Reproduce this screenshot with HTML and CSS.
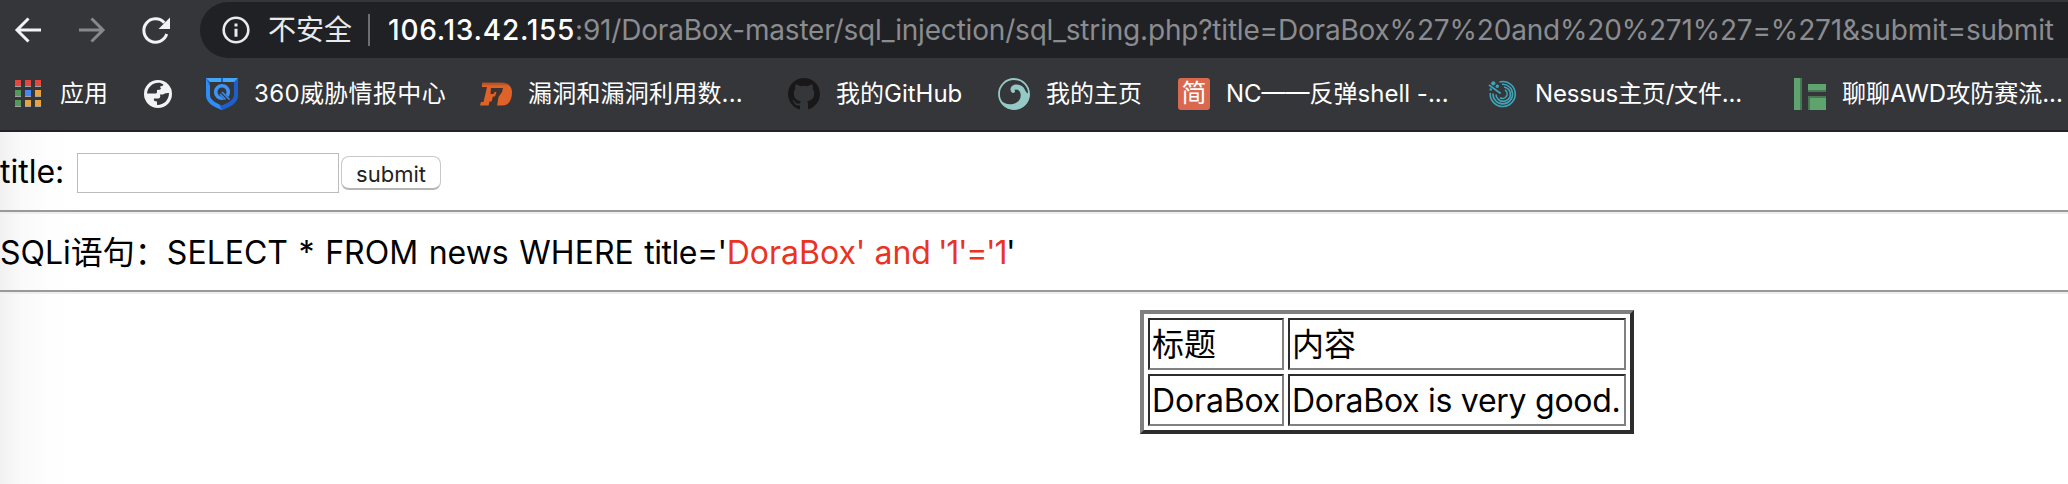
FILE: index.html
```html
<!DOCTYPE html>
<html lang="zh-CN">
<head>
<meta charset="utf-8">
<title>DoraBox</title>
<link rel="stylesheet" href="styles.css">
</head>
<body>
<header class="chrome">
  <div class="toolbar">
    <svg class="nav" viewBox="0 0 32 32"><path d="M29 16H5M16.500 4.500L5 16l11.500 11.500" fill="none" stroke="#f1f3f4" stroke-width="3"/></svg>
    <svg class="nav" viewBox="0 0 32 32"><path d="M3 16h24M15.500 4.500L27 16L15.500 27.500" fill="none" stroke="#87888b" stroke-width="3"/></svg>
    <svg class="nav" viewBox="0 0 32 32"><path d="M26.700 20A11.700 11.700 0 1 1 24.300 8.700" fill="none" stroke="#f1f3f4" stroke-width="3"/><path d="M30 3.500V15H18.500z" fill="#f1f3f4"/></svg>
    <div class="omnibox">
      <svg class="info" viewBox="0 0 28 28"><circle cx="14" cy="14" r="12.300" fill="none" stroke="#e8eaed" stroke-width="2.600"/><path d="M12.500 7.500h3v3h-3zM12.500 12.800h3v8h-3z" fill="#e8eaed"/></svg>
      <span class="insecure">不安全</span>
      <i class="divider"></i>
      <span class="host">106.13.42.155</span><span class="path">:91/DoraBox-master/sql_injection/sql_string.php?title=DoraBox%27%20and%20%271%27=%271&amp;submit=submit</span>
    </div>
  </div>
  <nav class="bookmarks">
    <a class="bm"><svg viewBox="0 0 32 32"><path d="M3 2h6v6H3zM13 2h6v6h-6zM23 2h6v6h-6z" fill="#e8453c"/><path d="M3 12h6v6H3zM3 22h6v6H3z" fill="#539a5a"/><path d="M13 12h6v6h-6z" fill="#4688f1"/><path d="M23 12h6v6h-6zM13 22h6v6h-6zM23 22h6v6h-6z" fill="#e8a33d"/><path d="M3 8h6v1H3zM13 8h6v1h-6zM23 8h6v1h-6zM3 18h6v1H3zM13 18h6v1h-6zM23 18h6v1h-6zM3 28h6v1H3zM13 28h6v1h-6zM23 28h6v1h-6z" fill="#a3a3a3"/></svg><span>应用</span></a>
    <a class="bm"><svg viewBox="0 0 32 32"><circle cx="16" cy="16" r="14" fill="#f1f3f4"/><path d="M18 4.700C11 4 5.500 9 5 15.500h9q1 0 1-2V12q3 0 4-1l-1-2.500q3 0 3.500-2zM18 16.500h3q2-2 6-1.500c0 7-5 12-12 12v-3.500q-4 0-3-3h4q3 0 2-4z" fill="#35363a"/></svg></a>
    <a class="bm"><svg viewBox="0 0 32 32"><path d="M0 0h32v17c0 8-8 12-16 15C8 29 0 25 0 17z" fill="#1e5fc9"/><path d="M0 0v17c0 8 8 12 16 15z" fill="#2f8df7"/><path d="M4 4h24v13c0 5-6 8-12 10.500C10 25 4 22 4 17z" fill="#35363a"/><path d="M0 0h15v4H4zM17 0h15l-4 4H17z" fill="#45a6f7"/><circle cx="16" cy="14" r="6.300" fill="none" stroke="#3d94f7" stroke-width="3.600"/><path d="M15.500 15.500l7 7" stroke="#35363a" stroke-width="5"/><path d="M16 14l7.500 7.500M14 16l5.500 5.500" stroke="#3d8be8" stroke-width="1.700"/><path d="M16 29.500V32c8-3 16-7 16-15h-4c0 5-6 8-12 10.500z" fill="#1e5fc9"/></svg><span class="b-intel">360威胁情报中心</span></a>
    <a class="bm"><svg viewBox="0 0 32 32"><path d="M2 5h19c8 0 11 4 11 9 0 8-3 13.500-10 13.500H0l1-3.500h2.500L7 9H2z" fill="#df6228"/><path d="M11 10h12l-1 4-3.500 5-1.500 9H8.500l1-4.500h2l1.500-5h2l1.500-4.500h-2l-1 2h-3z" fill="#3b3431"/><path d="M2 4.300h19c4 0 7 1 9 3H2z" fill="#a74c27" opacity=".6"/></svg><span class="b-vuln">漏洞和漏洞利用数...</span></a>
    <a class="bm"><svg viewBox="0 0 16 16"><path d="M8 0C3.580 0 0 3.580 0 8c0 3.540 2.290 6.530 5.470 7.590.4.070.55-.17.55-.38 0-.19-.01-.82-.01-1.490-2.010.37-2.530-.49-2.690-.94-.09-.23-.48-.94-.82-1.130-.28-.15-.68-.52-.01-.53.63-.01 1.080.58 1.230.82.72 1.210 1.870.87 2.330.66.07-.52.28-.87.51-1.070-1.780-.2-3.640-.89-3.640-3.950 0-.87.31-1.590.82-2.150-.08-.2-.36-1.020.08-2.120 0 0 .67-.21 2.200.82a7.600 7.600 0 0 1 4 0c1.530-1.040 2.200-.82 2.200-.82.44 1.100.16 1.920.08 2.120.51.56.82 1.270.82 2.150 0 3.070-1.870 3.750-3.650 3.950.29.25.54.73.54 1.480 0 1.070-.01 1.930-.01 2.200 0 .21.15.46.55.38A8.010 8.010 0 0 0 16 8c0-4.420-3.580-8-8-8z" fill="#191717"/></svg><span>我的GitHub</span></a>
    <a class="bm"><svg viewBox="0 0 32 32"><circle cx="16" cy="16" r="15" fill="none" stroke="#94c9c5" stroke-width="1.800"/><path d="M31.500 15c1 10-7 16.500-15.500 16.500-7 0-12-4-14-10 4 4.500 9 5.500 13 4.500 6-1.500 8.500-6 7.500-10.500-.7-3.500-4-5-6.500-3.500 1 0 1.500 1.500.5 2.500-1.500 1.300-4-.2-4-3 0-3 2.500-5 6-5 6 0 8 4 9 6.500 1 2 3 3 4 2z" fill="#94c9c5"/></svg><span>我的主页</span></a>
    <a class="bm"><span class="jian">简</span><span>NC——反弹shell -...</span></a>
    <a class="bm"><svg viewBox="0 0 32 32" fill="none" stroke="#3ea5b8" stroke-width="1.600"><path d="M11.500 4A12.500 12.500 0 1 1 2.300 15"/><path d="M14 6.300A9.800 9.800 0 1 1 5 15.500"/><path d="M16 9a7.200 7.200 0 1 1-8 7.500"/><path d="M17 12a4.500 4.500 0 0 1-5 7.700"/><path d="M1 7l11.700 8.500"/><g fill="#3ea5b8" stroke="none"><circle cx="5.300" cy="5.300" r="2.100"/><circle cx="9.300" cy="8.300" r="1.700"/><circle cx="2.700" cy="11.500" r="1.200"/></g></svg><span class="b-nessus">Nessus主页/文件...</span></a>
    <a class="bm"><svg viewBox="0 0 32 32"><path d="M0 0h8v32H0zM14 6h18v6H14zM14 19h18v13H14z" fill="#5da46e"/><path d="M6 0h2v32H6zM14 12h18v2H14zM14 18h18v2H14zM14 19h2v13h-2z" fill="#4a7656"/></svg><span>聊聊AWD攻防赛流...</span></a>
  </nav>
</header>
<main class="page">
  <form class="query"><label class="title" for="title">title:</label><input id="title" class="field" type="text"><button class="submit" type="button">submit</button></form>
  <hr class="rule">
  <p class="sql"><span class="label">SQLi语句：</span><span class="stmt">SELECT * FROM news WHERE </span><span class="assign">title='</span><span class="red">DoraBox' and <span class="tight">'1'='1</span></span>'</p>
  <hr class="rule">
  <table class="result">
    <tr><td class="c1">标题</td><td>内容</td></tr>
    <tr><td><span class="name">DoraBox</span></td><td><span class="content">DoraBox is very good.</span></td></tr>
  </table>
</main>
</body>
</html>
```
FILE: styles.css
```css
* { box-sizing: border-box; }
body {
  margin: 0;
  width: 2068px;
  height: 484px;
  overflow: hidden;
  background: #fff;
  color: #000;
  font-family: Inter, "Noto Sans CJK SC", sans-serif;
}
.chrome {
  height: 132px;
  background: #35363a;
  border-bottom: 2px solid #242225;
  overflow: hidden;
}
.toolbar { display: flex; align-items: center; height: 58px; padding: 2px 0 0 12px; }
.nav { width: 32px; height: 32px; margin-right: 32px; flex: none; }
.omnibox {
  display: flex;
  align-items: center;
  flex: none;
  width: 1900px;
  height: 56px;
  margin-left: -4px;
  padding-left: 22px;
  border-radius: 28px 0 0 28px;
  background: #202124;
  font-size: 28px;
  line-height: 56px;
  white-space: nowrap;
}
.info { width: 28px; height: 28px; flex: none; }
.insecure { margin-left: 18px; color: #e8eaed; }
.divider { width: 2px; height: 32px; margin: 0 18px 0 16px; background: #6d6e71; }
.host { width: 187px; color: #fff; font-weight: 500; letter-spacing: .75px; }
.path { color: #8b8c8f; letter-spacing: -.19px; }
.bookmarks {
  display: grid;
  grid-template-columns: 130px 64px 274px 308px 210px 180px 310px 306px 274px;
  height: 72px;
  padding-left: 12px;
  color: #fff;
  font-size: 24px;
}
.bm { display: flex; align-items: center; gap: 16px; white-space: nowrap; }
.bm span:last-child { padding-bottom: 5px; }
.bm svg { width: 32px; height: 32px; flex: none; }
.b-intel { letter-spacing: .35px; }
.b-vuln { letter-spacing: .2px; }
.b-nessus { margin-left: -1px; letter-spacing: -.2px; }
.jian {
  width: 32px;
  height: 32px;
  flex: none;
  border-radius: 3px;
  background: #d9684f;
  font-size: 25px;
  line-height: 31px;
  text-align: center;
}
.page {
  height: 352px;
  padding-top: 21px;
  background: linear-gradient(to right, #f1f1f1, #fafafa 22px, #fefefe 50px, #fff 80px);
  font-size: 32px;
}
.query { display: flex; height: 57px; }
.title { width: 77px; line-height: 38px; }
.field { width: 262px; height: 40px; border: 1px solid #bcbcbc; background: #fff; }
.submit {
  width: 100px;
  height: 34px;
  margin: 3px 0 0 2px;
  padding: 2px 0 0;
  border: 1px solid #c8c8c8;
  border-bottom: 2px solid #b5b5b5;
  border-radius: 8px;
  background: #fff;
  color: #222;
  font: 22px Inter, sans-serif;
}
.rule { height: 4px; margin: 0; border: 0; border-top: 2px solid #999; background: #eee; }
.sql { height: 76px; margin: 0; line-height: 78px; white-space: pre; }
.stmt { word-spacing: 1.6px; }
.assign { letter-spacing: -.5px; }
.red { color: #ea3323; }
.tight { margin-left: -2px; letter-spacing: -1.3px; }
.result {
  width: 494px;
  margin: 16px 0 0 1140px;
  border: 4px solid;
  border-color: #808080 #2c2c2c #2c2c2c #808080;
  border-spacing: 4px;
  table-layout: fixed;
}
.result td {
  height: 52px;
  padding: 2px 2px 0;
  border: 2px solid;
  border-color: #2c2c2c #808080 #808080 #2c2c2c;
  line-height: 44px;
  white-space: nowrap;
}
.result .c1 { width: 136px; }
.name { letter-spacing: -.15px; }
.content { letter-spacing: -.27px; }
```
